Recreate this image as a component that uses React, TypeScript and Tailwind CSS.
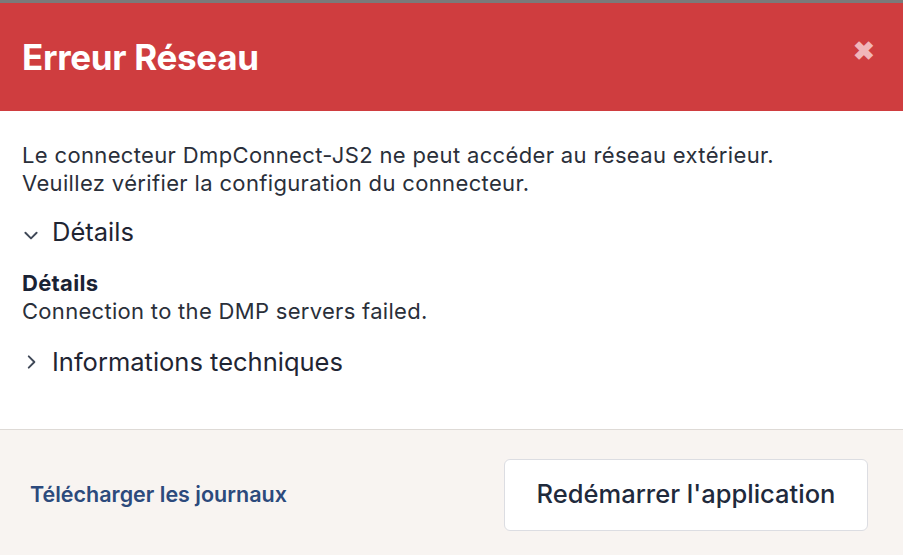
import React, { useState } from 'react';

const ChevronDown: React.FC = () => (
  <svg width="18" height="18" viewBox="0 0 16 16" fill="none" stroke="#3f4857" strokeWidth="1.7" strokeLinecap="round" strokeLinejoin="round">
    <path d="M3 6l5 5 5-5" />
  </svg>
);

const ChevronRight: React.FC = () => (
  <svg width="18" height="18" viewBox="0 0 16 16" fill="none" stroke="#3f4857" strokeWidth="1.7" strokeLinecap="round" strokeLinejoin="round">
    <path d="M6 3l5 5-5 5" />
  </svg>
);

const App: React.FC = () => {
  const [detailsOpen, setDetailsOpen] = useState(true);
  const [techOpen, setTechOpen] = useState(false);

  return (
    <div className="w-[903px] h-[555px] flex flex-col bg-white font-['Inter','Liberation_Sans',sans-serif] overflow-hidden">
      <div className="h-[3px] bg-[#7a7a7a]" />

      <div className="h-[108px] bg-[#cf3d3f] flex items-center justify-between pl-[22px] pr-[28px]">
        <h1 className="text-[35px] font-bold text-white tracking-[-0.3px]">Erreur Réseau</h1>
        <button className="text-[#f1b6b9] text-[26px] font-bold leading-none mb-[12px]">✖</button>
      </div>

      <div className="flex-1 px-[22px] pt-[30px] text-[#2a2f3a]">
        <p className="text-[22px] leading-[28px] tracking-[0.35px]">
          Le connecteur DmpConnect-JS2 ne peut accéder au réseau extérieur.
          <br />
          Veuillez vérifier la configuration du connecteur.
        </p>

        <button
          className="flex items-center gap-[12px] mt-[16px] text-[25.5px] text-[#1f2533]"
          onClick={() => setDetailsOpen(!detailsOpen)}
        >
          <span className="pt-[5px]">{detailsOpen ? <ChevronDown /> : <ChevronRight />}</span>
          Détails
        </button>

        {detailsOpen && (
          <div className="mt-[18px] text-[22px] leading-[28px] tracking-[0.3px]">
            <p className="font-bold text-[#1a2234]">Détails</p>
            <p>Connection to the DMP servers failed.</p>
          </div>
        )}

        <button
          className="flex items-center gap-[12px] mt-[18px] text-[25.5px] text-[#1f2533]"
          onClick={() => setTechOpen(!techOpen)}
        >
          <span>{techOpen ? <ChevronDown /> : <ChevronRight />}</span>
          Informations techniques
        </button>
      </div>

      <div className="h-[126px] border-t border-[#dedad6] bg-[#f8f4f1] flex items-center justify-between pl-[30px] pr-[35px] pt-[4px]">
        <a className="text-[21.5px] font-semibold text-[#2c4a7c] cursor-pointer">Télécharger les journaux</a>
        <button className="w-[364px] h-[72px] bg-white border border-[#dcdde2] rounded-[6px] text-[25.5px] font-medium text-[#1f2a3c]">
          Redémarrer l'application
        </button>
      </div>
    </div>
  );
};

export default App;
